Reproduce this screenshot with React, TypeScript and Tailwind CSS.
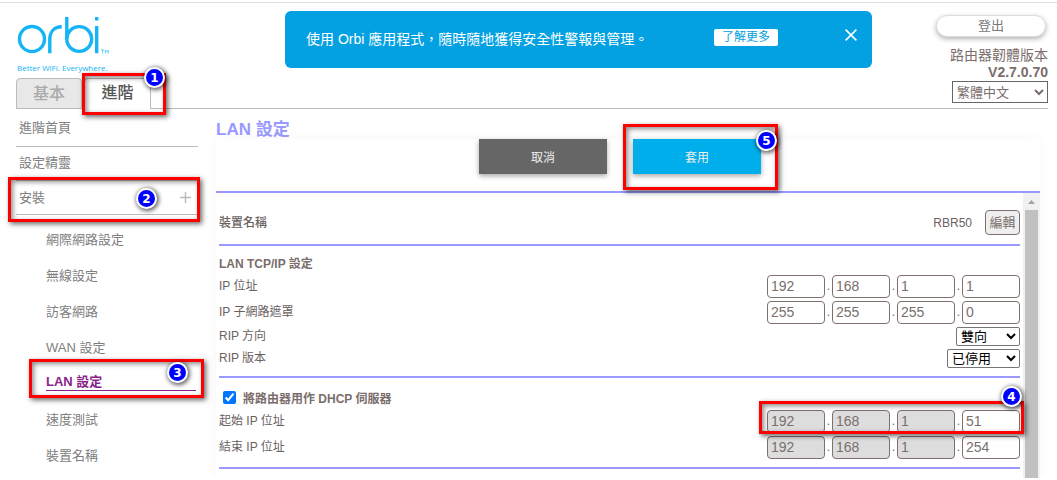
import { useState } from "react"
import type { ReactNode } from "react"
import clsx from "clsx"

const PURPLE_RULE = "border-[#9999ff]"

const subMenu = ["網際網路設定", "無線設定", "訪客網路", "WAN 設定", "LAN 設定", "速度測試", "裝置名稱"]

interface CalloutProps {
  step: number
  frame: string
  badge: string
}

// Red step marker that floats over the element it points at
function Callout({ step, frame, badge }: CalloutProps) {
  return (
    <>
      <span
        className={clsx(
          "pointer-events-none absolute z-10 border-3 border-[#ff0000] shadow-[2px_2px_5px_rgba(0,0,0,0.6),inset_2px_2px_5px_rgba(0,0,0,0.45)]",
          frame,
        )}
      />
      <span
        className={clsx(
          "pointer-events-none absolute z-20 flex size-[21px] items-center justify-center rounded-full border-2 border-white bg-[#0000ff] font-['DejaVu_Sans'] text-[12px] leading-none font-bold text-white shadow-[1px_1px_4px_1px_rgba(0,0,0,0.6)]",
          badge,
        )}
      >
        {step}
      </span>
    </>
  )
}

function Logo() {
  return (
    <a href="#home" className="block w-fit text-[#14b4f5]" aria-label="Orbi">
      <svg width="94" height="46" viewBox="0 0 94 46" fill="none" stroke="currentColor" strokeWidth="3.4">
        <circle cx="16" cy="24" r="12.5" />
        <path d="M33.8 38.3V24.5c0-7.6 4.4-12.7 12-12.7" />
        <path d="M50.8 2v22" />
        <circle cx="63.2" cy="24" r="12.4" />
        <path d="M80.7 11v27.3M80.7 2v3.4" />
        <path d="M85 35h3.2M86.6 35v3.6M89.3 38.6V35l1.5 2.2 1.5-2.2v3.6" strokeWidth="0.6" />
      </svg>
      <span className="block pl-px font-['Open_Sans'] text-[8px] leading-[14px] font-medium whitespace-nowrap">
        Better WiFi. Everywhere.
      </span>
    </a>
  )
}

function Banner() {
  const [open, setOpen] = useState(true)
  return (
    <div className="mt-2 h-[57px] min-w-0 flex-1">
      {open && (
        <div className="flex h-full items-start rounded-md bg-[#03a1e2] pt-[18px] pr-[15px] pl-[21px] text-white">
          <p className="flex-1 text-[14px] leading-5 whitespace-nowrap">使用 Orbi 應用程式，隨時隨地獲得安全性警報與管理。</p>
          <button className="h-[17px] w-16 rounded-xs bg-white text-[12px] leading-[17px] text-[#03a1e2]">了解更多</button>
          <button className="ml-[67px]" aria-label="關閉" onClick={() => setOpen(false)}>
            <svg width="12" height="12" viewBox="0 0 12 12" stroke="currentColor" strokeWidth="1.6">
              <path d="M.6.6l10.8 10.8M11.4.6L.6 11.4" />
            </svg>
          </button>
        </div>
      )}
    </div>
  )
}

function Header() {
  return (
    <header className="flex items-start border-b border-[#bbb]">
      <div className="w-[269px] shrink-0 pt-3">
        <Logo />
        <nav className="relative z-10 mt-[3px] -mb-px flex gap-0.5 text-[16px] leading-[27px] font-medium">
          <button className="h-[31px] w-[66px] rounded-t-sm border border-[#bbb] bg-[#e8e8e8] text-[#aaa]">基本</button>
          <div className="relative">
            <button className="h-[31px] w-[67px] rounded-t-sm border border-b-0 border-[#bbb] bg-white pb-1 text-[#555]">進階</button>
            <Callout step={1} frame="-top-[5px] -left-0.5 h-[42px] w-[84px]" badge="-top-[11px] left-[60px]" />
          </div>
        </nav>
      </div>
      <Banner />
      <div className="ml-16 flex w-28 shrink-0 flex-col items-end pt-3 text-[#7a6d6b]">
        <button className="mr-0.5 h-[22px] w-[110px] rounded-full border border-[#ddd] bg-white text-[13px] leading-5 text-[#777] shadow-[0_2px_5px_rgba(0,0,0,0.3)]">
          登出
        </button>
        <span className="mt-[10px] text-[14px] leading-[17px]">路由器韌體版本</span>
        <span className="text-[14px] leading-[17px] font-bold">V2.7.0.70</span>
        <select aria-label="語言" className="h-[22px] w-24 border border-[#666] bg-white text-[13px]">
          <option>繁體中文</option>
          <option>English</option>
        </select>
      </div>
    </header>
  )
}

function Sidebar() {
  return (
    <aside className="w-[182px] shrink-0 text-[13px] text-[#808080]">
      <a href="#advanced" className="flex h-[38px] items-center border-b border-[#bbb] pl-[3px]">
        進階首頁
      </a>
      <a href="#wizard" className="flex h-[34px] items-center border-b border-[#bbb] pb-0.5 pl-[3px]">
        設定精靈
      </a>
      <div className="relative">
        <button className="flex h-[34px] w-full items-center justify-between border-b border-[#bbb] pr-[7px] pl-[3px]">
          安裝
          <svg width="11" height="11" viewBox="0 0 11 11" stroke="#bbb" strokeWidth="1.5">
            <path d="M5.5 0v11M0 5.5h11" />
          </svg>
        </button>
        <Callout step={2} frame="-top-1 -left-2 h-[45px] w-48" badge="top-[7px] left-[120px]" />
      </div>
      <ul className="pt-[7px] pr-0.5 pl-[30px]">
        {subMenu.map((label) => {
          const active = label === "LAN 設定"
          return (
            <li key={label} className={clsx("relative h-9", active ? "pt-2" : "pt-[10px]")}>
              <a
                href="#setup"
                className={clsx("block leading-4", active && "border-b border-[#8a1f8a] font-bold text-[#8a1f8a]")}
              >
                {label}
              </a>
              {active && <Callout step={3} frame="-top-[7px] -left-[17px] h-[39px] w-[175px]" badge="-top-1 left-[121px]" />}
            </li>
          )
        })}
      </ul>
    </aside>
  )
}

interface IpRowProps {
  label: string
  value: number[]
  locked?: boolean
  children?: ReactNode
}

function IpRow({ label, value, locked, children }: IpRowProps) {
  return (
    <div role="group" aria-label={label} className="relative flex h-[26px] items-center justify-between">
      <span>{label}</span>
      <div className="flex">
        {value.map((octet, i) => (
          <div key={i} className="flex">
            {i > 0 && <span className="w-[7px] text-center leading-[23px]">.</span>}
            <input
              type="text"
              aria-label={`${label} ${i + 1}`}
              defaultValue={octet}
              disabled={locked && i < 3}
              className="h-[23px] w-[58px] rounded-sm border border-[#7f6f6d] bg-white px-[3px] text-[14px] text-[#7a6f6c] disabled:bg-[#dddddd]"
            />
          </div>
        ))}
      </div>
      {children}
    </div>
  )
}

interface SelectRowProps {
  id: string
  label: string
  options: string[]
  width: string
}

function SelectRow({ id, label, options, width }: SelectRowProps) {
  return (
    <div className="flex h-[22px] items-center justify-between">
      <label htmlFor={id}>{label}</label>
      <select id={id} className={clsx("h-[19px] rounded-xs border border-[#767676] bg-white text-[13px] text-black", width)}>
        {options.map((o) => (
          <option key={o}>{o}</option>
        ))}
      </select>
    </div>
  )
}

function ScrollTrack() {
  return (
    <div className="flex w-[17px] shrink-0 flex-col items-center bg-[#f1f1f1]">
      <svg width="17" height="17" viewBox="0 0 17 17" fill="#a3a3a3">
        <path d="M8.5 7L12 11H5z" />
      </svg>
      <div className="w-[13px] flex-1 bg-[#c1c1c1]" />
    </div>
  )
}

function LanSettings() {
  return (
    <main className="mr-2 ml-[18px] min-w-0 flex-1 pt-[11px]">
      <h1 className="text-[17px] leading-[19px] font-bold text-[#9999ff]">LAN 設定</h1>
      <div className="shadow-[0_0_12px_rgba(0,0,0,0.04)]">
        <div className={clsx("flex justify-center gap-[26px] border-b-2 pr-4 pb-[17px] text-[12px] text-[#eee]", PURPLE_RULE)}>
          <button className="h-[35px] w-32 bg-[#666] pt-0.5 shadow-[0_2px_5px_rgba(0,0,0,0.35)]">取消</button>
          <div className="relative">
            <button className="h-[35px] w-32 bg-[#00aeeb] pt-0.5 shadow-[0_2px_5px_rgba(0,0,0,0.35)]">套用</button>
            <Callout step={5} frame="-top-[15px] -left-[10px] h-[66px] w-[155px]" badge="-top-[9px] left-[123px]" />
          </div>
        </div>
        <form className="flex" onSubmit={(e) => e.preventDefault()}>
          <div className="mx-[3px] flex-1 pb-[9px] text-[12px] text-[#6b625f]">
            <section className={clsx("flex items-center border-b-2 pt-[17px] pb-[9px]", PURPLE_RULE)}>
              <span className="flex-1 font-medium">裝置名稱</span>
              <span>RBR50</span>
              <button className="ml-[13px] h-[25px] w-[35px] rounded-sm border border-[#7f6f6d] bg-[#efefef] text-[13px] text-[#7a6f6c]">
                編輯
              </button>
            </section>

            <section className={clsx("border-b-2 pt-[9px] pb-[7px]", PURPLE_RULE)}>
              <h2 className="leading-[18px] font-bold text-[#7a6d6b]">LAN TCP/IP 設定</h2>
              <IpRow label="IP 位址" value={[192, 168, 1, 1]} />
              <IpRow label="IP 子網路遮罩" value={[255, 255, 255, 0]} />
              <SelectRow id="rip-direction" label="RIP 方向" options={["雙向", "僅輸入", "僅輸出"]} width="w-16" />
              <SelectRow id="rip-version" label="RIP 版本" options={["已停用", "RIP-1", "RIP-2B", "RIP-2M"]} width="w-[73px]" />
            </section>

            <section className={clsx("border-b-2 pt-3 pb-[7px]", PURPLE_RULE)}>
              <label className="flex h-[18px] items-center gap-[7px] pl-1 font-bold text-[#7a6d6b]">
                <input type="checkbox" defaultChecked className="mb-1 size-[13px] accent-[#0075ff]" />
                將路由器用作 DHCP 伺服器
              </label>
              <IpRow label="起始 IP 位址" value={[192, 168, 1, 51]} locked>
                <Callout step={4} frame="-top-[7px] -right-1 h-[33px] w-[265px]" badge="-top-[22px] -right-0.5" />
              </IpRow>
              <IpRow label="結束 IP 位址" value={[192, 168, 1, 254]} locked />
            </section>
          </div>
          <ScrollTrack />
        </form>
      </div>
    </main>
  )
}

export default function App() {
  return (
    <div className="bg-white pt-0.5 font-['Liberation_Sans','Noto_Sans_CJK_TC',sans-serif]">
      <div className="border-t border-[#ddd] pr-[9px] pl-4">
        <Header />
        <div className="flex">
          <Sidebar />
          <LanSettings />
        </div>
      </div>
    </div>
  )
}
